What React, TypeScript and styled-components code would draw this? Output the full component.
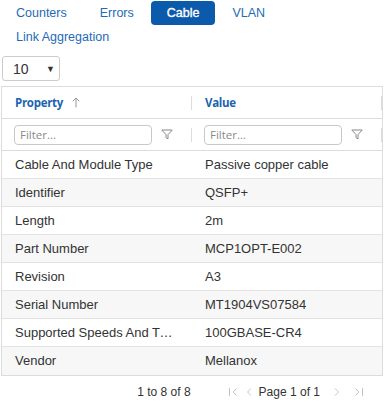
import React from "react";
import styled, { createGlobalStyle, css } from "styled-components";

const GlobalStyle = createGlobalStyle`
  html, body { margin: 0; padding: 0; background: #fff; }
  body { font-family: "Liberation Sans", Arial, sans-serif; font-size: 13px; color: #333; }
  * { box-sizing: border-box; }
`;

const Page = styled.div`
  width: 384px;
  height: 407px;
  overflow: hidden;
  display: flex;
  flex-direction: column;
  & > * { flex-shrink: 0; }
`;

const Tabs = styled.div`
  display: flex;
  flex-wrap: wrap;
  width: 300px;
  padding: 1px 0 0 0;
  column-gap: 1px;
`;

const Tab = styled.div<{ $active?: boolean }>`
  height: 24px;
  line-height: 24px;
  padding: 0 16px;
  border-radius: 4px;
  color: #1d6bb7;
  font-size: 12.5px;
  white-space: nowrap;
  ${(p) =>
    p.$active &&
    css`
      background: #0b5aab;
      color: #fff;
      -webkit-text-stroke: 0.35px #fff;
    `}
`;

const SelectBox = styled.div`
  margin: 7px 0 0 2px;
  width: 58px;
  height: 25px;
  border: 1px solid #ccc;
  border-radius: 3px;
  display: flex;
  align-items: center;
  justify-content: space-between;
  padding: 0 4px 0 10px;
  font-size: 14px;
  color: #333;
`;

const Caret = styled.span`
  font-size: 9px;
  color: #333;
`;

const Grid = styled.div`
  margin: 5px 0 0 1px;
  width: 382px;
  border: 1px solid #dcdcdc;
  display: flex;
  flex-direction: column;
`;

const HeaderRow = styled.div`
  height: 32px;
  display: grid;
  grid-template-columns: 190px 190px;
  border-bottom: 1px solid #dcdcdc;
`;

const FilterRow = styled.div`
  height: 32px;
  display: grid;
  grid-template-columns: 190px 190px;
  border-bottom: 1px solid #dcdcdc;
`;

const HeaderCell = styled.div`
  position: relative;
  display: flex;
  align-items: center;
  padding: 0 12px 0 13px;
  font-family: "Open Sans", "Noto Sans", sans-serif;
  font-weight: 700;
  font-size: 11.5px;
  letter-spacing: -0.3px;
  color: #1a64b2;
  &::after {
    content: "";
    position: absolute;
    right: 0;
    top: 9px;
    height: 14px;
    width: 1px;
    background: #dcdcdc;
  }
`;

const SortIcon = styled.svg`
  margin-left: 9px;
`;

const FilterCell = styled.div`
  position: relative;
  display: flex;
  align-items: center;
  padding: 0 12px 0 12px;
  &::after {
    content: "";
    position: absolute;
    right: 0;
    top: 9px;
    height: 14px;
    width: 1px;
    background: #dcdcdc;
  }
`;

const FilterInput = styled.div`
  width: 138px;
  height: 20px;
  border: 1px solid #c8c8c8;
  border-radius: 4px;
  display: flex;
  align-items: center;
  padding: 0 5px;
  font-family: "Open Sans", "Noto Sans", sans-serif;
  font-size: 11.5px;
  color: #8a8a8a;
`;

const FilterIconWrap = styled.div`
  flex: 1;
  display: flex;
  justify-content: center;
  padding-left: 2px;
`;

const Row = styled.div<{ $alt?: boolean }>`
  height: 28px;
  display: grid;
  grid-template-columns: 190px 190px;
  border-bottom: 1px solid #e2e2e2;
  background: ${(p) => (p.$alt ? "#f7f7f7" : "#fff")};
  &:last-child { border-bottom: none; }
`;

const Cell = styled.div`
  display: block;
  line-height: 27px;
  padding: 0 17px 0 13px;
  color: #333;
  font-size: 13px;
  white-space: nowrap;
  overflow: hidden;
  text-overflow: ellipsis;
`;

const Footer = styled.div`
  height: 31px;
  display: flex;
  align-items: center;
  justify-content: flex-end;
  padding: 1px 21px 0 0;
  font-size: 12px;
  color: #333;
`;

const Summary = styled.span`
  margin-right: 38px;
`;

const PageBtn = styled.span<{ $mr: number }>`
  display: flex;
  align-items: center;
  margin-right: ${(p) => p.$mr}px;
`;

const PageText = styled.span`
  margin-right: 13px;
`;

const rows: [string, string][] = [
  ["Cable And Module Type", "Passive copper cable"],
  ["Identifier", "QSFP+"],
  ["Length", "2m"],
  ["Part Number", "MCP1OPT-E002"],
  ["Revision", "A3"],
  ["Serial Number", "MT1904VS07584"],
  ["Supported Speeds And Transceivers", "100GBASE-CR4"],
  ["Vendor", "Mellanox"],
];

const Funnel = () => (
  <svg width="12" height="11" viewBox="0 0 12 11">
    <path d="M0.8 1 H11.2 L7 5.6 V9.8 L5 8.6 V5.6 Z" fill="none" stroke="#888" strokeWidth="1" strokeLinejoin="round" />
  </svg>
);

const Filter = () => (
  <FilterCell>
    <FilterInput>Filter...</FilterInput>
    <FilterIconWrap>
      <Funnel />
    </FilterIconWrap>
  </FilterCell>
);

const NAV = "#c4c4c4";

const Chevron = ({ kind }: { kind: "first" | "prev" | "next" | "last" }) => {
  const d = {
    first: "M0.5 1 V9 M7.5 1.5 L4 5 L7.5 8.5",
    prev: "M6 1.5 L2.5 5 L6 8.5",
    next: "M2 1.5 L5.5 5 L2 8.5",
    last: "M0.5 1.5 L4 5 L0.5 8.5 M7.5 1 V9",
  }[kind];
  return (
    <svg width="8" height="10" viewBox="0 0 8 10">
      <path d={d} fill="none" stroke={NAV} strokeWidth="1" />
    </svg>
  );
};

export default function App() {
  return (
    <Page>
      <GlobalStyle />
      <Tabs>
        <Tab>Counters</Tab>
        <Tab>Errors</Tab>
        <Tab $active>Cable</Tab>
        <Tab>VLAN</Tab>
        <Tab>Link Aggregation</Tab>
      </Tabs>
      <SelectBox>
        <span>10</span>
        <Caret>▼</Caret>
      </SelectBox>
      <Grid>
        <HeaderRow>
          <HeaderCell>
            Property
            <SortIcon width="8" height="11" viewBox="0 0 8 11">
              <path d="M4 10.5 V1 M0.8 4.2 L4 1 L7.2 4.2" fill="none" stroke="#999" strokeWidth="1" />
            </SortIcon>
          </HeaderCell>
          <HeaderCell>Value</HeaderCell>
        </HeaderRow>
        <FilterRow>
          <Filter />
          <Filter />
        </FilterRow>
        {rows.map(([k, v], i) => (
          <Row key={k} $alt={i % 2 === 1}>
            <Cell>{k}</Cell>
            <Cell>{v}</Cell>
          </Row>
        ))}
      </Grid>
      <Footer>
        <Summary>1 to 8 of 8</Summary>
        <PageBtn $mr={8}><Chevron kind="first" /></PageBtn>
        <PageBtn $mr={6}><Chevron kind="prev" /></PageBtn>
        <PageText>Page 1 of 1</PageText>
        <PageBtn $mr={14}><Chevron kind="next" /></PageBtn>
        <PageBtn $mr={0}><Chevron kind="last" /></PageBtn>
      </Footer>
    </Page>
  );
}
